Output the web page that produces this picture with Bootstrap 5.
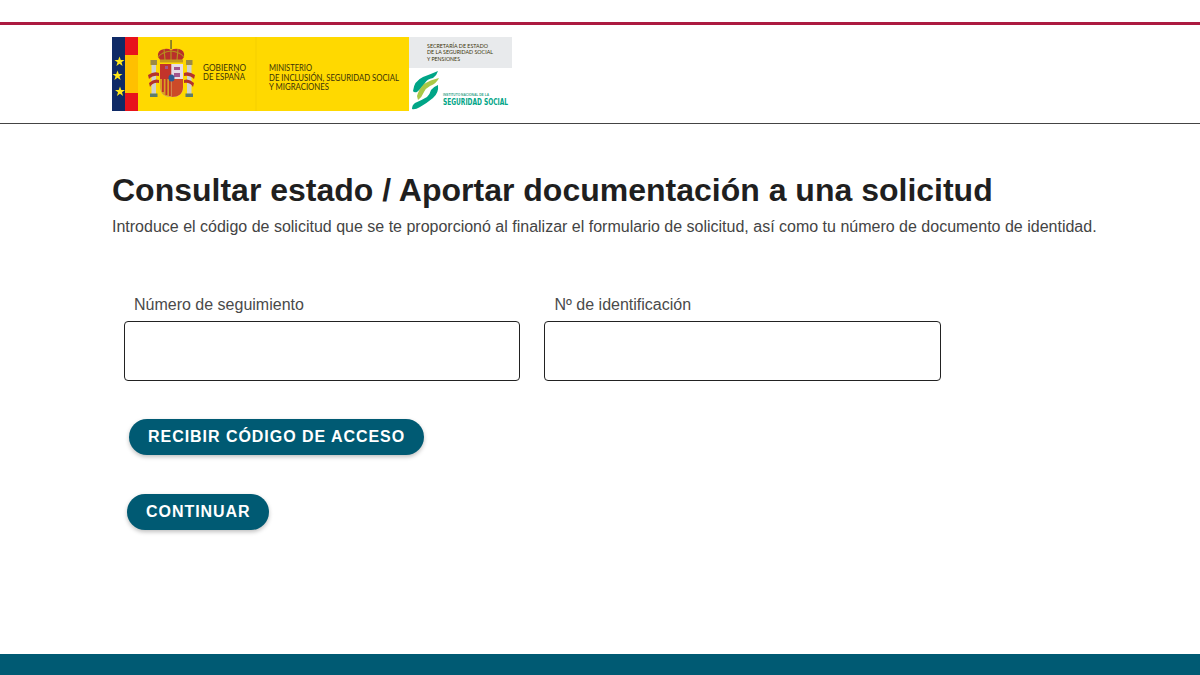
<!DOCTYPE html>
<html lang="es">

<head>
    <meta charset="UTF-8">
    <meta name="viewport" content="width=device-width, initial-scale=1.0">
    <title>Consultar estado</title>
    <link href="https://cdn.jsdelivr.net/npm/bootstrap@5.3.0/dist/css/bootstrap.min.css" rel="stylesheet">
    <style>
        html, body { height: 675px; overflow: hidden; }
        body { font-family: "Liberation Sans", Arial, sans-serif; color: #333; background: #fff; }
        .page-wrap { height: 675px; }
        .top-head { margin-top: 22px; height: 102px; border-top: 3px solid #ac1a40; border-bottom: 1px solid #444; padding: 12px 0 0 112px; }
        .top-head svg { display: block; }
        .logo-txt { font-family: Lato, "Liberation Sans", sans-serif; fill: #3a3208; }
        .main-area { padding: 48px 0 0 112px; }
        .main-title { font-size: 32px; font-weight: 700; line-height: 36px; color: #1f1f1f; margin: 0 0 9px; }
        .main-sub { font-size: 16px; line-height: 20px; color: #444; margin: 0; }
        .fields-row { margin: 58px 0 0 12px; gap: 24px; }
        .field-box { width: 396px; }
        .field-box:last-child { width: 397px; }
        .field-box label { font-size: 16px; line-height: 20px; color: #4a4a4a; padding-left: 10px; margin-bottom: 6px; display: block; }
        .field-box:last-child label { padding-left: 10.5px; }
        .field-box .form-control { height: 60px; border: 1px solid #222; border-radius: 4px; }
        .pill-btn { background: #005a73; color: #fff; font-size: 16px; font-weight: 700; letter-spacing: .96px; line-height: 20px; border: 0; border-radius: 18px; height: 36px; padding: 0 19px; box-shadow: 0 2px 4px rgba(0, 0, 0, .25); }
        .pill-btn:hover { background: #005a73; color: #fff; }
        .btn-one { margin: 38px 0 0 17px; }
        .btn-two { margin: 39px 0 0 15px; }
        .btn-two .pill-btn { padding-right: 18.5px; }
        .foot-bar { height: 21px; background: #005a73; }
    </style>
</head>

<body>
    <div class="page-wrap d-flex flex-column">
        <header class="top-head">
            <svg width="440" height="74" viewBox="0 0 440 74" role="img" aria-label="Gobierno de España">
                <!-- flag strip -->
                <rect width="297" height="74" fill="#ffd900"/>
                <rect width="13" height="74" fill="#0f2a66"/>
                <rect x="13" width="13" height="18" fill="#e8121c"/>
                <rect x="13" y="18" width="13" height="38" fill="#ffc000"/>
                <rect x="13" y="56" width="13" height="18" fill="#e8121c"/>
                <g fill="#ffe81a">
                    <polygon points="7.500,19.500 8.800,23 12.500,23 9.500,25.300 10.600,29 7.500,26.800 4.400,29 5.500,25.300 2.500,23 6.200,23"/>
                    <polygon points="5.500,33.500 6.800,37 10.500,37 7.500,39.300 8.600,43 5.500,40.800 2.400,43 3.500,39.300 0.500,37 4.200,37"/>
                    <polygon points="8,49.500 9.300,53 13,53 10,55.300 11.100,59 8,56.800 4.900,59 6,55.300 3,53 6.700,53"/>
                </g>
                <!-- coat of arms -->
                <g>
                    <rect x="39.500" y="27" width="4.500" height="30" fill="#cfd2cf"/>
                    <rect x="75" y="27" width="4.500" height="30" fill="#cfd2cf"/>
                    <rect x="38.500" y="23" width="6.500" height="5" fill="#9c8a45"/>
                    <rect x="74" y="23" width="6.500" height="5" fill="#9c8a45"/>
                    <rect x="38" y="56.500" width="7.500" height="3.500" fill="#5d7d6a"/>
                    <rect x="73.500" y="56.500" width="7.500" height="3.500" fill="#5d7d6a"/>
                    <path d="M36 38 Q42 34 47 36 L47 39 Q41 38 37 42 Z M37 46 Q42 41 47 43 L47 46 Q41 45 38 50 Z M83 38 Q77 34 72 36 L72 39 Q78 38 82 42 Z M82 46 Q77 41 72 43 L72 46 Q78 45 81 50 Z" fill="#b5322a"/>
                    <path d="M46 20 Q45 13 52 12 Q56 11 59 13 Q63 11 67 12 Q73 13 72 20 L69 24 L49 24 Z" fill="#b9302a"/>
                    <path d="M46 20 Q50 15 59 14 Q68 15 72 20 M52 12 L53 23 M66 12 L65 23 M59 13 V23" fill="none" stroke="#b58f1e" stroke-width="1.200"/>
                    <rect x="48" y="22.500" width="23" height="3" fill="#c49a1c"/>
                    <rect x="58.300" y="3" width="1.500" height="9" fill="#6f6a30"/>
                    <path d="M48 27 H71 V50 Q71 60 59.500 60 Q48 60 48 50 Z" fill="#d8d4c4"/>
                    <rect x="48" y="27" width="11.500" height="15" fill="#c2332b"/>
                    <rect x="59.500" y="27" width="11.500" height="15" fill="#e6dce4"/>
                    <path d="M53 29 h3 v3 h-3 Z M62 30 h6 v3 h-6 Z M62 36 h6 v4 h-6 Z" fill="#a2568c"/>
                    <path d="M48 42 H59.500 V60 Q48 60 48 50 Z" fill="#d9a021"/>
                    <path d="M59.500 42 H71 V50 Q71 60 59.500 60 Z" fill="#cc4a28"/>
                    <g fill="#c2332b">
                        <rect x="50" y="42" width="1.800" height="13"/>
                        <rect x="53.500" y="42" width="1.800" height="16"/>
                        <rect x="57" y="42" width="1.800" height="17"/>
                    </g>
                    <ellipse cx="59.500" cy="41" rx="3" ry="3.500" fill="#2c5b93"/>
                </g>
                <!-- logo texts -->
                <text class="logo-txt" x="91" y="34.300" font-size="8.500" textLength="43" lengthAdjust="spacingAndGlyphs">GOBIERNO</text>
                <text class="logo-txt" x="91" y="43" font-size="8.500" textLength="42" lengthAdjust="spacingAndGlyphs">DE ESPAÑA</text>
                <line x1="144" y1="0" x2="144" y2="74" stroke="#f5cf00" stroke-width="1"/>
                <text class="logo-txt" x="157" y="33.500" font-size="8.500" textLength="43" lengthAdjust="spacingAndGlyphs">MINISTERIO</text>
                <text class="logo-txt" x="157" y="43.500" font-size="8.500" textLength="130" lengthAdjust="spacingAndGlyphs">DE INCLUSIÓN, SEGURIDAD SOCIAL</text>
                <text class="logo-txt" x="157" y="52.500" font-size="8.500" textLength="60" lengthAdjust="spacingAndGlyphs">Y MIGRACIONES</text>
                <!-- secretaria block -->
                <rect x="297" width="103" height="31" fill="#e8eaec"/>
                <text class="logo-txt" x="315" y="10.700" font-size="5.500" textLength="61" lengthAdjust="spacingAndGlyphs">SECRETARÍA DE ESTADO</text>
                <text class="logo-txt" x="315" y="17" font-size="5.500" textLength="66" lengthAdjust="spacingAndGlyphs">DE LA SEGURIDAD SOCIAL</text>
                <text class="logo-txt" x="315" y="23.500" font-size="5.500" textLength="33" lengthAdjust="spacingAndGlyphs">Y PENSIONES</text>
                <!-- seguridad social symbol -->
                <path d="M326 34 Q325 38 321 41 Q315 42 313 46 Q310 51 305 55 Q302 56 301 54 Q302 44 311 40 Q319 37 326 34 Z" fill="#00a587"/>
                <path d="M327 41 Q325 46 318 49 Q314 51 312 55 Q310 60 306 63 L305 59 Q307 52 312 47 Q318 43 327 41 Z" fill="#a9c846"/>
                <path d="M326 48 Q327 56 321 61 Q315 66 308 70 Q303 73 300 72 Q300 68 303 66 Q310 63 315 60 Q318 57 319 53 Q321 50 326 48 Z" fill="#00a587"/>
                <text x="331" y="59" font-family="Liberation Sans, sans-serif" font-size="3.800" font-weight="700" fill="#3aa58c" textLength="46" lengthAdjust="spacingAndGlyphs">INSTITUTO NACIONAL DE LA</text>
                <text x="331" y="68" font-family="DejaVu Sans, sans-serif" font-size="8" font-weight="700" fill="#00a587" textLength="65" lengthAdjust="spacingAndGlyphs">SEGURIDAD SOCIAL</text>
            </svg>
        </header>

        <main class="main-area flex-grow-1">
            <h1 class="main-title">Consultar estado / Aportar documentación a una solicitud</h1>
            <p class="main-sub">Introduce el código de solicitud que se te proporcionó al finalizar el formulario de solicitud, así como tu número de documento de identidad.</p>

            <form>
                <div class="fields-row d-flex">
                    <div class="field-box">
                        <label for="seguimiento">Número de seguimiento</label>
                        <input type="text" class="form-control" id="seguimiento">
                    </div>
                    <div class="field-box">
                        <label for="identificacion">Nº de identificación</label>
                        <input type="text" class="form-control" id="identificacion">
                    </div>
                </div>
                <div class="btn-one"><button type="button" class="btn pill-btn">RECIBIR CÓDIGO DE ACCESO</button></div>
                <div class="btn-two"><button type="button" class="btn pill-btn">CONTINUAR</button></div>
            </form>
        </main>

        <footer class="foot-bar"></footer>
    </div>

    <script src="https://cdn.jsdelivr.net/npm/bootstrap@5.3.0/dist/js/bootstrap.bundle.min.js"></script>
</body>

</html>
